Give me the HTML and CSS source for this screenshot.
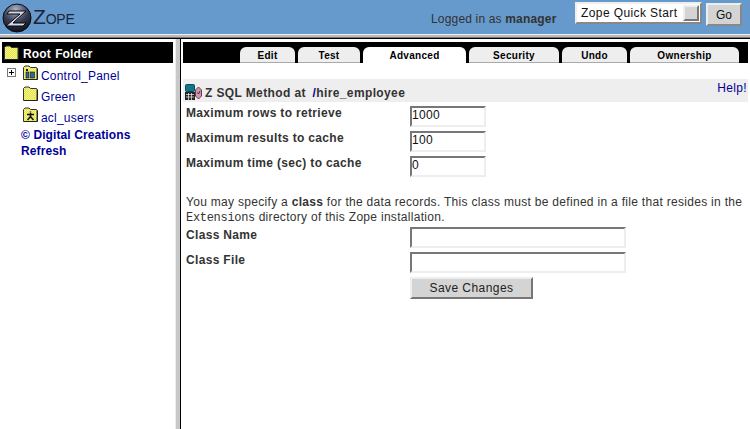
FILE: index.html
```html
<!DOCTYPE html>
<html lang="en">
<head>
<meta charset="utf-8">
<title>Zope</title>
<link rel="stylesheet" href="styles.css">
</head>
<body>
<svg class="defs" width="0" height="0">
  <defs>
    <pattern id="dither" width="2" height="2" patternUnits="userSpaceOnUse">
      <rect width="2" height="2" fill="#ffff33"/>
      <rect width="1" height="1" fill="#d8d8a0"/>
      <rect x="1" y="1" width="1" height="1" fill="#d8d8a0"/>
    </pattern>
    <radialGradient id="ball" cx="0.45" cy="0.2" r="0.85">
      <stop offset="0" stop-color="#aab4c8"/>
      <stop offset="0.5" stop-color="#3a4058"/>
      <stop offset="1" stop-color="#08090f"/>
    </radialGradient>
    <symbol id="folder" viewBox="0 0 15 15">
      <path d="M.5 14.500V2.500L2 1h4l1.500 1.500h6l.5.500v11.500z" fill="url(#dither)" stroke="#333"/>
      <path d="M14.500 3.500v11H1" fill="none" stroke="#222"/>
    </symbol>
  </defs>
</svg>
<header class="top">
  <div class="brand">
    <svg class="ball" width="30" height="30" viewBox="0 0 30 30">
      <circle cx="15" cy="15" r="14" fill="url(#ball)" stroke="#0a0b12"/>
      <path d="M7 8h17L11 20h13l-3 3H4l14-12H5z" fill="#d4d8e4" stroke="#05060c"/>
    </svg>
    <span class="wordmark"><span class="wordmark-z">Z</span>OPE</span>
  </div>
  <div class="login">Logged in as <strong>manager</strong></div>
  <div class="quick">
    <div class="select"><span class="select-text">Zope Quick Start</span><span class="select-arrow"></span></div>
    <button class="go" type="button">Go</button>
  </div>
</header>
<div class="rule"></div>
<div class="frames">
  <aside class="tree">
    <div class="root">
      <svg class="icon" width="15" height="15"><use href="#folder"/></svg>
      <span class="root-label">Root Folder</span>
    </div>
    <ul class="nodes">
      <li class="node">
        <span class="plus"></span>
        <svg class="icon" width="15" height="15" viewBox="0 0 15 15">
          <use href="#folder" width="15" height="15"/>
          <rect x="3" y="7" width="3" height="6" fill="#336699" stroke="#111" stroke-width=".6"/>
          <rect x="7.500" y="7" width="4" height="6" fill="#336699" stroke="#111" stroke-width=".6"/>
          <rect x="3" y="4" width="2" height="2" fill="#111"/>
        </svg>
        <a href="#">Control_Panel</a>
      </li>
      <li class="node">
        <span class="plus plus-empty"></span>
        <svg class="icon" width="15" height="15"><use href="#folder"/></svg>
        <a href="#">Green</a>
      </li>
      <li class="node">
        <span class="plus plus-empty"></span>
        <svg class="icon" width="15" height="15" viewBox="0 0 15 15">
          <use href="#folder" width="15" height="15"/>
          <path d="M7.500 4.500v1M4 7.500h7M7.500 6v3.500M7.500 9.500l-3 3.500M7.500 9.500l3 3.500" stroke="#111" stroke-width="1.500" fill="none"/>
        </svg>
        <a href="#">acl_users</a>
      </li>
    </ul>
    <a class="credit" href="#">© Digital Creations</a>
    <a class="credit credit-last" href="#">Refresh</a>
  </aside>
  <div class="divider"></div>
  <main class="content">
    <nav class="tabs">
      <a class="tab tab-edit" href="#">Edit</a>
      <a class="tab tab-test" href="#">Test</a>
      <a class="tab tab-adv tab-active" href="#">Advanced</a>
      <a class="tab tab-sec" href="#">Security</a>
      <a class="tab tab-undo" href="#">Undo</a>
      <a class="tab tab-own" href="#">Ownership</a>
    </nav>
    <div class="titlebar">
      <svg class="sql" width="17" height="16" viewBox="0 0 17 16">
        <path d="M10.500 6l3-3 3 3v6l-3 3-3-3z" fill="#cc99aa" stroke="#773355"/>
        <path d="M12.500 8.500l1 1.500 1.500-3" fill="none" stroke="#333"/>
        <rect x=".5" y=".5" width="9" height="7" rx="1" fill="#117788" stroke="#0a4a55"/>
        <rect x="0" y="8" width="10" height="8" fill="#222"/>
        <path d="M1 10.500h8M1 13h8M3.500 9v7M6.500 9v7" stroke="#ddd" stroke-width=".8"/>
      </svg>
      <span class="title">Z SQL Method at <span class="path"><a href="#">/</a>hire_employee</span></span>
      <a class="help" href="#">Help!</a>
    </div>
    <form class="form">
      <label class="label">Maximum rows to retrieve</label>
      <input class="field field-short" value="1000">
      <label class="label">Maximum results to cache</label>
      <input class="field field-short" value="100">
      <label class="label">Maximum time (sec) to cache</label>
      <input class="field field-short" value="0">
    </form>
    <p class="note">You may specify a <strong>class</strong> for the data records. This class must be defined in a file that resides in the <code>Extensions</code> directory of this Zope installation.</p>
    <form class="form form-class">
      <label class="label label-class">Class Name</label>
      <input class="field field-long">
      <label class="label label-class">Class File</label>
      <input class="field field-long">
      <span></span>
      <button class="save" type="button">Save Changes</button>
    </form>
  </main>
</div>
</body>
</html>
```
FILE: styles.css
```css
* { box-sizing: border-box; }
html, body { margin: 0; padding: 0; }
body {
  width: 750px;
  height: 429px;
  overflow: hidden;
  background: #fff;
  font-family: "Liberation Sans", Arial, sans-serif;
  font-size: 12px;
  color: #333;
  display: flex;
  flex-direction: column;
}
a { color: #000099; text-decoration: none; }
.defs { display: block; height: 0; }

.top {
  height: 34px;
  background: #6699cc;
  display: flex;
  align-items: flex-start;
  flex: none;
}
.brand { display: flex; align-items: center; padding: 2px 0 0 2px; width: 431px; }
.ball { display: block; flex: none; }
.wordmark { font-size: 14px; color: #1c2438; margin-left: 1px; letter-spacing: -.2px; line-height: 30px; }
.wordmark-z { font-size: 21px; }
.login { width: 144px; padding-top: 12px; line-height: 15px; color: #333; letter-spacing: .17px; white-space: nowrap; }
.quick { display: flex; gap: 4px; padding-top: 2px; }
.select {
  width: 127px;
  height: 22px;
  background: #fff;
  border: 2px solid;
  border-color: #eee #888 #888 #eee;
  display: flex;
  align-items: center;
  justify-content: space-between;
  padding: 1px;
}
.select-text { padding-left: 3px; color: #111; letter-spacing: .4px; font-size: 12px; }
.select-arrow {
  width: 16px;
  height: 16px;
  background: #d4d4d4;
  border: 2px solid;
  border-color: #eee #777 #777 #eee;
}
.go {
  width: 36px;
  height: 23px;
  margin-top: 1px;
  padding: 0;
  background: #d4d4d4;
  border: 2px solid;
  border-color: #eee #888 #888 #eee;
  font: 12px "Liberation Sans", Arial, sans-serif;
  color: #111;
}
.rule {
  height: 4px;
  flex: none;
  background: #bbb;
  border-top: 1px solid #eee;
  border-bottom: 1px solid #777;
}
.frames { flex: 1; display: flex; min-height: 0; border-top: 1px solid #000; }

.tree { width: 175px; flex: none; padding: 3px 2px 0 2px; }
.root {
  height: 21px;
  background: #000;
  color: #fff;
  font-weight: bold;
  display: flex;
  align-items: center;
  gap: 4px;
  padding: 0 0 1px 2px;
  font-size: 12px;
  letter-spacing: .1px;
  word-spacing: 1px;
}
.root-label { margin-top: 4px; }
.icon { display: block; flex: none; }
.nodes { list-style: none; margin: 2px 0 0; padding: 0; }
.node {
  height: 21px;
  display: flex;
  align-items: center;
  gap: 3px;
  padding-left: 5px;
  color: #000099;
  letter-spacing: .2px;
}
.plus {
  width: 9px;
  height: 9px;
  margin-right: 4px;
  margin-top: -6px;
  border: 1px solid #777;
  background:
    linear-gradient(#000, #000) center / 5px 1px no-repeat,
    linear-gradient(#000, #000) center / 1px 5px no-repeat,
    #fff;
  flex: none;
}
.plus-empty { border: 0; background: none; }
.node .icon { margin-top: -6px; }
.credit {
  display: block;
  font-weight: bold;
  margin-left: 19px;
  line-height: 16px;
  letter-spacing: .1px;
}
.nodes + .credit { margin-top: -1px; }

.divider {
  width: 6px;
  flex: none;
  background: #c8c8c8;
  border-left: 1px solid #eee;
  border-right: 1px solid #000;
}

.content { flex: 1; min-width: 0; padding: 3px 2px 0 2px; }
.tabs {
  height: 21px;
  background: #000;
  display: flex;
  align-items: flex-end;
  gap: 3px;
  padding-left: 57px;
}
.tab {
  height: 16px;
  background: #eee;
  border-bottom: 1px solid #aaa;
  border-radius: 6px 6px 0 0;
  color: #000;
  font-weight: bold;
  font-size: 10px;
  line-height: 17px;
  text-align: center;
  letter-spacing: .3px;
}
.tab-edit { width: 55px; }
.tab-test { width: 62px; }
.tab-adv { width: 103px; }
.tab-sec { width: 90px; }
.tab-undo { width: 65px; }
.tab-own { width: 109px; }
.tab-active { background: #fff; border-bottom: 0; }

.titlebar {
  height: 23px;
  margin-top: 16px;
  background: #eee;
  display: flex;
  align-items: center;
  font-weight: bold;
  padding: 1px 1px 0 2px;
}
.sql { display: block; flex: none; margin-right: 3px; margin-top: 1px; }
.title { flex: 1; letter-spacing: .38px; white-space: pre; margin-top: 3px; }
.path { margin-left: 3px; }
.help { font-weight: normal; margin-top: -7px; letter-spacing: .35px; }

.form {
  display: grid;
  grid-template-columns: 224px 1fr;
  row-gap: 4px;
  padding: 4px 0 0 3px;
  align-items: start;
}
.label { font-weight: bold; line-height: 15px; height: 21px; letter-spacing: .33px; }
.label-class { padding-top: 1px; }
.field {
  display: block;
  height: 21px;
  padding: 0 0 3px;
  background: #fff;
  border: 2px solid;
  border-color: #777 #eee #eee #777;
  font: 12px "Liberation Sans", Arial, sans-serif;
  color: #111;
  letter-spacing: .3px;
  outline: 0;
}
.field-short { width: 76px; }
.field-long { width: 216px; }
.note { margin: 18px 0 0 3px; line-height: 15px; letter-spacing: .3px; color: #333; }
.note strong { color: #333; }
.note code { font: 12px "Liberation Mono", monospace; letter-spacing: -.3px; }
.form-class { padding-top: 2px; }
.save {
  display: block;
  width: 123px;
  height: 22px;
  padding: 0;
  background: #d4d4d4;
  border: 2px solid;
  border-color: #eee #777 #777 #eee;
  font: 12px "Liberation Sans", Arial, sans-serif;
  color: #222;
  letter-spacing: .45px;
}
```
